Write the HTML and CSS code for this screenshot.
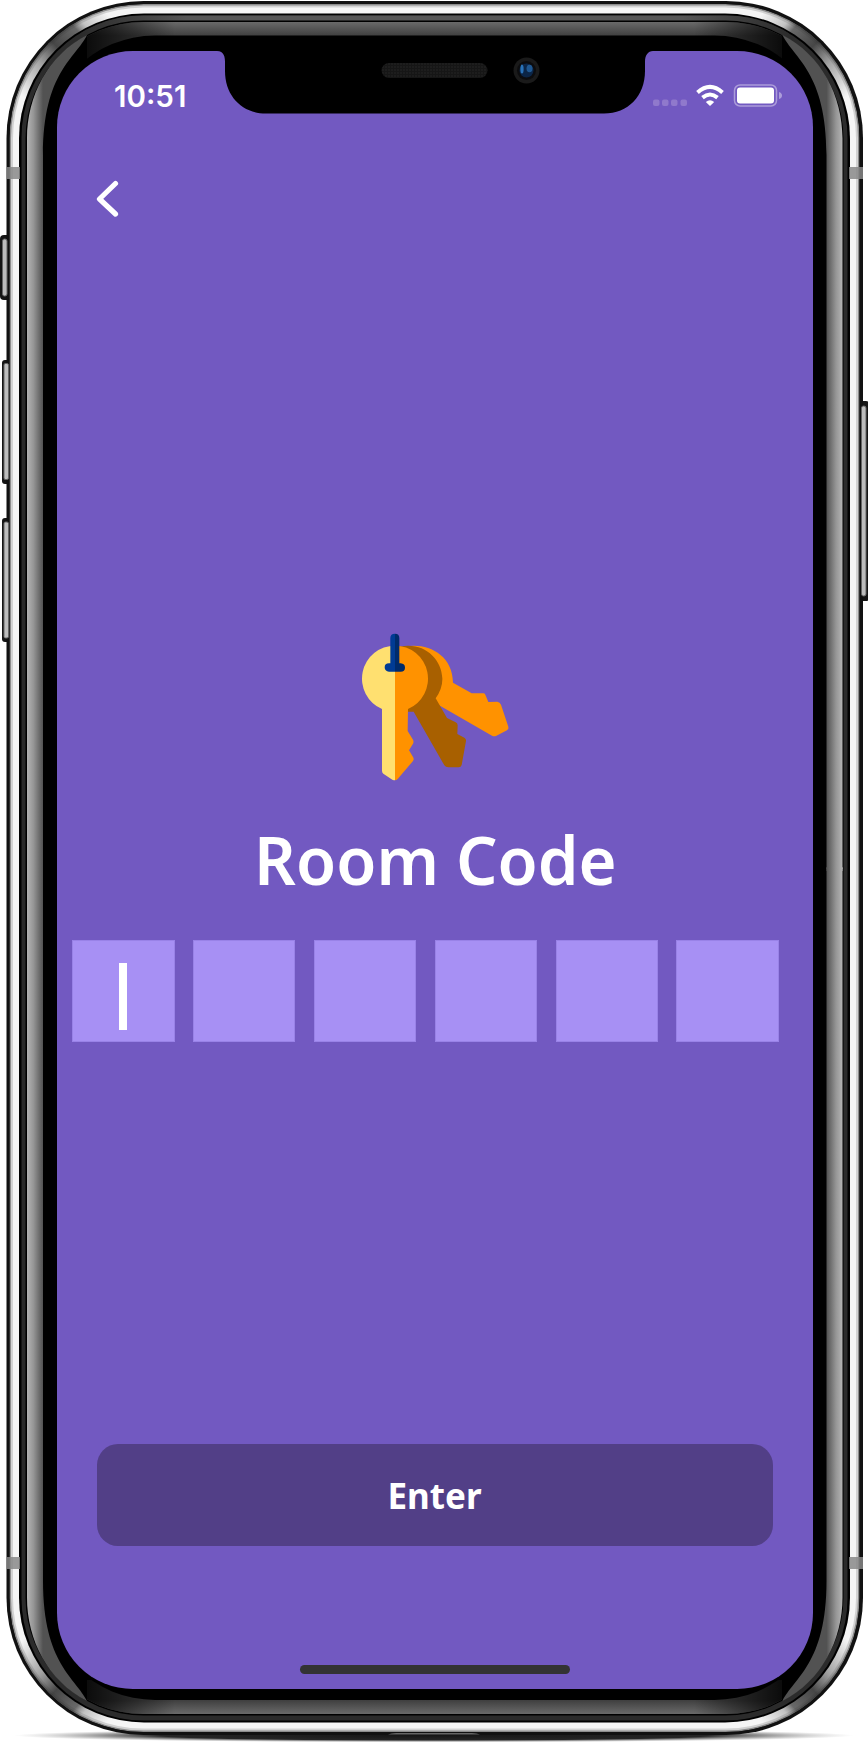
FILE: index.html
```html
<!DOCTYPE html>
<html lang="en">
<head>
<meta charset="utf-8">
<title>Room Code</title>
<link rel="stylesheet" href="styles.css">
</head>
<body>
<main class="phone">
  <svg class="frame" viewBox="0 0 868 1743" aria-hidden="true">
    <defs>
      <linearGradient id="glassGlow" gradientUnits="userSpaceOnUse" x1="27" y1="0" x2="43" y2="0"><stop offset="0" stop-color="#b4b4b4"/><stop offset=".4" stop-color="#969696"/><stop offset="1" stop-color="#525252"/></linearGradient>
      <linearGradient id="glassEdge" gradientUnits="userSpaceOnUse" x1="0" y1="22" x2="0" y2="1714"><stop offset="0" stop-color="#6a6a6a"/><stop offset=".008" stop-color="#404040"/><stop offset=".992" stop-color="#404040"/><stop offset="1" stop-color="#6a6a6a"/></linearGradient>
      <linearGradient id="fade" gradientUnits="userSpaceOnUse" x1="84" y1="0" x2="785" y2="0"><stop offset="0" stop-color="#000" stop-opacity=".85"/><stop offset=".13" stop-color="#000" stop-opacity="0"/><stop offset=".87" stop-color="#000" stop-opacity="0"/><stop offset="1" stop-color="#000" stop-opacity=".85"/></linearGradient>
      <linearGradient id="rimTop" gradientUnits="userSpaceOnUse" x1="80" y1="0" x2="789" y2="0"><stop offset="0" stop-color="#2b2b2b"/><stop offset=".15" stop-color="#555"/><stop offset=".85" stop-color="#555"/><stop offset="1" stop-color="#2b2b2b"/></linearGradient>
      <radialGradient id="shadow"><stop offset="0" stop-color="#161616"/><stop offset=".65" stop-color="#252525"/><stop offset="1" stop-color="#999" stop-opacity="0"/></radialGradient>
      <linearGradient id="smear" gradientUnits="userSpaceOnUse" x1="18" y1="92" x2="104" y2="10"><stop offset="0" stop-color="#555" stop-opacity="0"/><stop offset=".3" stop-color="#555" stop-opacity=".5"/><stop offset=".5" stop-color="#333" stop-opacity=".9"/><stop offset=".72" stop-color="#3a3a3a" stop-opacity=".75"/><stop offset=".8" stop-color="#777" stop-opacity=".4"/><stop offset="1" stop-color="#777" stop-opacity="0"/></linearGradient>
      <pattern id="mesh" width="3" height="3" patternUnits="userSpaceOnUse"><rect width="3" height="3" fill="#161616"/><circle cx="1" cy="1" r=".8" fill="#262626"/></pattern>
      <clipPath id="steelClip"><rect x="9.5" y="4" width="850" height="1728" rx="134"/></clipPath>
      <clipPath id="rimClip"><rect x="21.5" y="15.5" width="826" height="1705" rx="122"/></clipPath>
      <clipPath id="glassClip"><rect x="27" y="22" width="815.5" height="1692" rx="116.5"/></clipPath>
      <path id="sideHighlight" d="M27 869V138.500C27 96 48 55 87 35C76 58 43 72 43 155V869Z" fill="url(#glassGlow)"/>
      <rect id="cornerSmear" x="9" y="3" width="110" height="110" fill="url(#smear)"/>
    </defs>
    <ellipse cx="434" cy="1735.500" rx="420" ry="7" fill="url(#shadow)"/>
    <g fill="#151515">
      <rect x="0" y="235" width="12" height="65" rx="4"/>
      <rect x="2" y="360" width="10" height="124" rx="3"/>
      <rect x="2" y="518" width="10" height="124" rx="3"/>
      <rect x="859" y="401" width="10" height="200" rx="3"/>
    </g>
    <rect x="6.5" y="1" width="856.5" height="1734" rx="137" fill="#111"/>
    <g clip-path="url(#steelClip)">
      <rect x="9.5" y="4" width="850" height="1728" rx="134" fill="#8c8c8c"/>
      <rect x="11" y="5.5" width="847" height="1725" rx="132.5" fill="#d2d2d2"/>
      <rect x="13" y="7.5" width="843" height="1721" rx="130.5" fill="#f5f5f5"/>
      <use href="#cornerSmear"/>
      <use href="#cornerSmear" transform="matrix(-1 0 0 1 869.5 0)"/>
      <use href="#cornerSmear" transform="matrix(1 0 0 -1 0 1736)"/>
      <use href="#cornerSmear" transform="matrix(-1 0 0 -1 869.5 1736)"/>
    </g>
    <rect x="19" y="13.5" width="831" height="1709" rx="125" fill="#000"/>
    <rect x="21.5" y="15.5" width="826" height="1705" rx="122" fill="#2b2b2b"/>
    <rect x="80" y="15" width="709" height="25" fill="url(#rimTop)" clip-path="url(#rimClip)"/>
    <rect x="25.5" y="20.5" width="818" height="1695" rx="118" fill="#000"/>
    <g clip-path="url(#glassClip)">
      <path d="M87 20H782V60H87ZM87 1716H782V1680H87Z" fill="url(#glassEdge)"/>
      <path d="M84 20H785V62H84ZM84 1674H785V1716H84Z" fill="url(#fade)"/>
    </g>
    <rect x="43" y="35.5" width="783.5" height="1664.500" rx="112" fill="#000"/>
    <g fill="url(#glassGlow)">
      <rect x="27" y="868" width="16" height="3"/>
      <rect x="27" y="868" width="16" height="3" transform="matrix(-1 0 0 1 869.5 0)"/>
    </g>
    <use href="#sideHighlight"/>
    <use href="#sideHighlight" transform="matrix(-1 0 0 1 869.5 0)"/>
    <use href="#sideHighlight" transform="matrix(1 0 0 -1 0 1736)"/>
    <use href="#sideHighlight" transform="matrix(-1 0 0 -1 869.5 1736)"/>
    <g fill="#888" opacity=".85">
      <rect x="7" y="167" width="13" height="12"/><rect x="849" y="167" width="14" height="12"/>
      <rect x="7" y="1557" width="13" height="12"/><rect x="849" y="1557" width="14" height="12"/>
    </g>
    <g fill="#bdbdbd" stroke="#666" stroke-width="1">
      <rect x="2.5" y="239" width="4.5" height="57" rx="2"/>
      <rect x="4" y="363.5" width="4.5" height="116" rx="1.5"/>
      <rect x="4" y="522" width="4.5" height="116" rx="1.5"/>
      <rect x="861.5" y="406" width="4.5" height="190" rx="2"/>
    </g>
    <path d="M388 1734.500Q391 1733 396 1733H472Q477 1733 480 1734.500Z" fill="#666"/>
  </svg>

  <section class="screen">
    <svg class="notch" viewBox="0 0 436 63" aria-hidden="true">
      <path d="M0 0C7 0 8 6 8 11V20C8 45 25 62.500 49 62.500H387C411 62.500 428 45 428 20V11C428 4 431 0 436 0Z" fill="#000"/>
      <rect x="164.500" y="12" width="106" height="15" rx="7.500" fill="url(#mesh)"/>
      <circle cx="309.500" cy="19.500" r="13" fill="#1a1a1a"/>
      <circle cx="309.500" cy="19.500" r="9.500" fill="#0c0c0e"/>
      <circle cx="309.500" cy="19.500" r="7" fill="#0b2547"/>
      <ellipse cx="305" cy="18" rx="1.600" ry="4.500" fill="#2972b8"/>
      <ellipse cx="312.500" cy="17.500" rx="3" ry="3.800" fill="#1f5790"/>
    </svg>
    <header class="status">
      <time class="clock">10:51</time>
      <svg class="indicators" width="130" height="24" viewBox="0 0 130 24" aria-hidden="true">
        <g fill="#9079cc"><rect y="15.500" width="6.500" height="6.500" rx="2"/><rect x="9" y="15.500" width="6.500" height="6.500" rx="2"/><rect x="18" y="15.500" width="6.500" height="6.500" rx="2"/><rect x="27.500" y="15.500" width="6.500" height="6.500" rx="2"/></g>
        <g fill="none" stroke="#fff" stroke-width="4"><path d="M44.500 8.400Q57 -2.500 69.500 8.400"/><path d="M49.500 13.600Q57 7.500 64.500 13.600"/></g>
        <path d="M52.800 18Q57 14.500 61.200 18L57 22Z" fill="#fff"/>
        <rect x="81.500" y="1" width="42" height="21" rx="5.500" fill="none" stroke="#ac9cda" stroke-width="1.500"/>
        <rect x="84" y="3.500" width="37" height="16" rx="3" fill="#fff"/>
        <path d="M126 8Q129 9 129 11.500T126 15Z" fill="#ac9cda"/>
      </svg>
    </header>
    <svg class="back" width="24" height="40" viewBox="0 0 24 40" role="img" aria-label="Back"><path d="M20.500 4.500 4.500 20 20.500 35" fill="none" stroke="#fff" stroke-width="5.200" stroke-linecap="round" stroke-linejoin="round"/></svg>

    <svg class="keys" width="190" height="190" viewBox="0 0 570 570" aria-hidden="true">
      <path d="M195 110C260 97 338 132 339 218L395 250H430Q434 250 436 254L445 276 472 275Q480 276 483 284L505 350Q507 356 501 361L468 378Q462 380 456 377L296 285 240 230Z" fill="#ff9200"/>
      <path d="M180 110C250 95 305 145 307 205Q308 235 287 265L321 324 347 337Q353 340 353 346L352 372 373 383Q379 387 378 393L365 465Q363 472 356 472H325Q317 472 313 466L221 305H195Z" fill="#a86000"/>
      <path d="M165 107A99 99 0 0 0 126 297V482Q126 488 130 491L157 509Q161 511 165 511Z" fill="#ffe070"/>
      <path d="M165 107A99 99 0 0 1 204 297L203 363L219 389Q222 395 219 401L207 421 219 441Q223 447 219 453L173 507Q169 511 165 511Z" fill="#ff9200"/>
      <path d="M151 160V84Q151 71 165 71V185H147Q134 184 134 172T147 160Z" fill="#003b94"/>
      <path d="M165 71Q178 71 178 84V160H182Q195 161 195 173T182 185H165Z" fill="#002b6b"/>
    </svg>
    <h1 class="title"><span class="title-text">Room Code</span></h1>
    <div class="code">
      <span class="digit"><i class="caret"></i></span><span class="digit"></span><span class="digit"></span><span class="digit"></span><span class="digit"></span><span class="digit"></span>
    </div>
    <button class="enter" type="button">Enter</button>
    <div class="home"></div>
  </section>
</main>
</body>
</html>
```
FILE: styles.css
```css
* { box-sizing: border-box; }
body { margin: 0; background: #fff; }
.phone { position: relative; width: 868px; height: 1743px; padding: 50.5px 55px 54px 57px; overflow: hidden; }
.frame { position: absolute; inset: 0; width: 868px; height: 1743px; }
.screen { position: relative; display: flex; flex-direction: column; width: 756px; height: 1638.5px; border-radius: 76px; background: #7259c1; overflow: hidden; color: #fff; }
.notch { position: absolute; top: 0; left: 160px; width: 436px; height: 63px; }
.status { display: flex; justify-content: space-between; height: 24px; margin: 33.5px 29px 0 57px; }
.clock { font: 600 29.5px/25px Inter, sans-serif; }
.indicators { margin-right: 1px; }
.back { margin: 71px 0 0 38px; }
.keys { flex: none; align-self: flex-start; margin: 390.5px 0 0 283px; }
.title { height: 80px; margin: 19px 0 0; font: 600 67px/80px "Noto Sans", sans-serif; text-align: center; white-space: nowrap; }
.title-text { display: inline-block; transform: scaleX(.973); }
.code { display: grid; grid-template-columns: repeat(6, 102.5px); column-gap: 18.4px; margin: 41px 0 0 15px; }
.digit { display: flex; justify-content: center; height: 102px; padding-top: 23px; background: #a790f4; box-shadow: inset 0 0 0 1px #9982e7; }
.caret { width: 8px; height: 67px; background: #fff; }
.enter { flex: none; height: 102px; margin: 402px 40px 0; padding: 2px 1px 0 0; border: 0; border-radius: 21px; background: #523f87; color: #fff; font: 700 35px/100px "Noto Sans", sans-serif; }
.home { flex: none; align-self: center; width: 270px; height: 9px; margin-top: 119.5px; border-radius: 5px; background: #333; }
```
